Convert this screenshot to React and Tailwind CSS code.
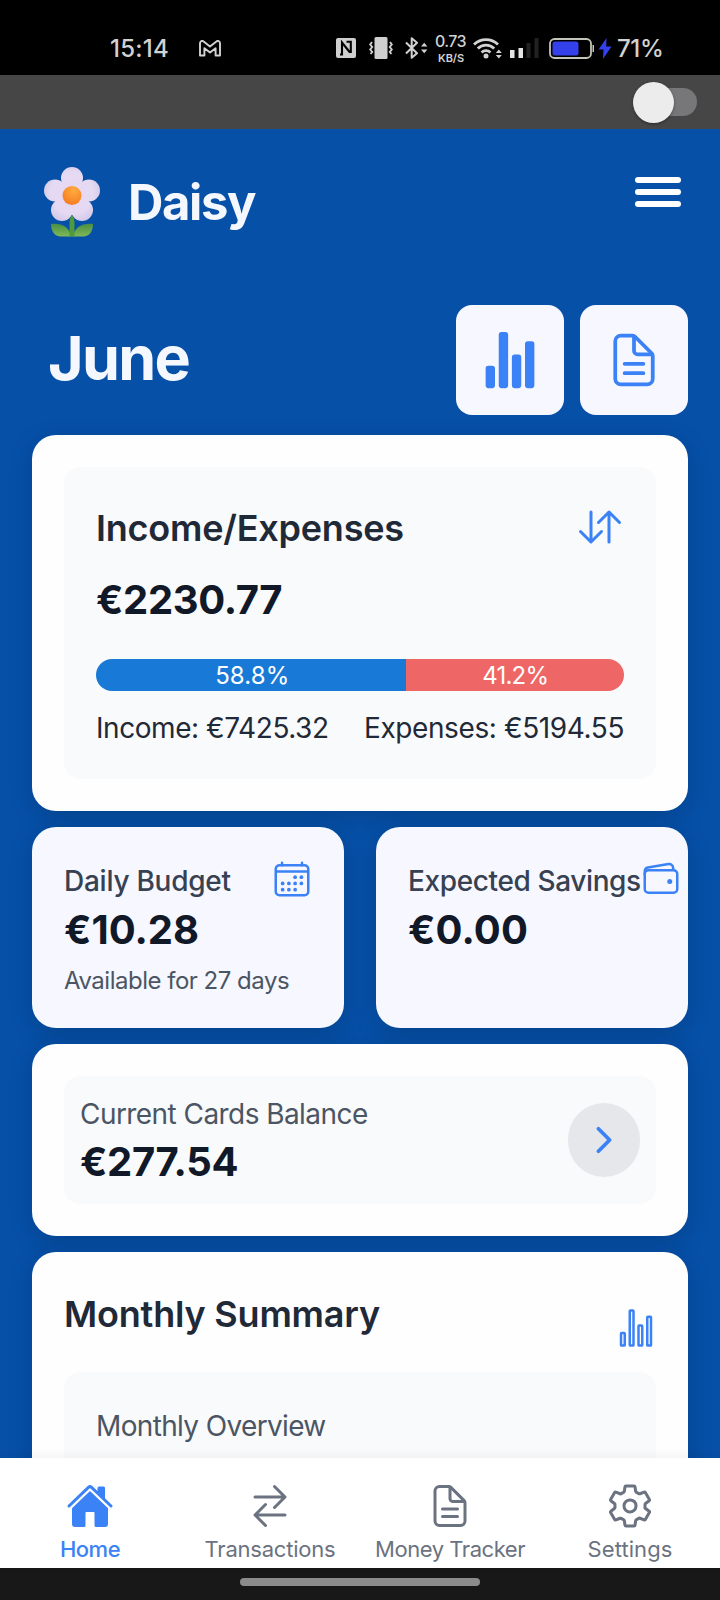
import React from 'react';
import {
  IoStatsChart,
  IoStatsChartOutline,
  IoDocumentTextOutline,
  IoSwapVerticalOutline,
  IoCalendarOutline,
  IoWalletOutline,
  IoHome,
  IoSwapHorizontalOutline,
  IoSettingsOutline,
  IoChevronForward,
} from 'react-icons/io5';

function StatusBar() {
  return (
    <div className="flex h-[75px] shrink-0 items-start bg-black pr-[57px] pl-[110px] pt-8 text-[#d2d2d2]">
      <div className="w-[89px] text-2xl leading-[33px] font-medium tracking-[0.24px]">15:14</div>
      <svg className="mt-2 h-[17px] w-[22px]" viewBox="0 0 22 17" fill="none" stroke="currentColor" strokeWidth="1.9" strokeLinejoin="round">
        <path d="M1 15.5V3.2C1 1 3.2.3 4.6 1.5L11 6.6l6.4-5.1C18.8.3 21 1 21 3.2v12.3h-4.4V8.2L11 12.5 5.4 8.2v7.3z" />
      </svg>
      <div className="flex-1" />
      <svg className="mt-1.5 mr-[13px] h-5 w-5" viewBox="0 0 20 20">
        <rect width="20" height="20" rx="2" fill="#cfcfcf" />
        <path d="M4 16.5h2V4.500L14 14.500M10.500 3.800H14.800V15" fill="none" stroke="#000" strokeWidth="2.100" />
      </svg>
      <svg className="mt-[5px] mr-3 h-[22px] w-6" viewBox="0 0 24 22" fill="none" stroke="#cfcfcf" strokeWidth="1.9">
        <rect x="5.5" y="0" width="13" height="22" rx="1.5" fill="#cfcfcf" stroke="none" />
        <path d="M3 5L1.2 7.5 3.2 10 1.2 12.5 3.2 15 1.5 17M21 5l1.800 2.500L20.800 10l2 2.500-2 2.500 1.700 2" />
      </svg>
      <svg className="mt-[5px] mr-[7px] h-[22px] w-[23px]" viewBox="0 0 23 22">
        <path d="M1 5.5l11 10.700-5.300 4.600V1.200L12 5.800 1 16.500" fill="none" stroke="#d2d2d2" strokeWidth="2" strokeLinejoin="round" />
        <path d="M16 9.500l3.200-3.800 3.200 3.800zM16 12.500l3.200 3.800 3.200-3.800z" fill="#d2d2d2" />
      </svg>
      <div className="flex w-[32px] flex-col items-center gap-px font-medium whitespace-nowrap">
        <div className="-ml-px text-base leading-[19px] tracking-[-0.6px]">0.73</div>
        <div className="text-[11px] leading-[13px] font-semibold tracking-[-0.1px]">KB/S</div>
      </div>
      <svg className="mt-1 ml-[6px] h-[23px] w-[30px]" viewBox="0 0 30 23">
        <g fill="none" stroke="#d2d2d2" strokeWidth="2.8">
          <path d="M1 8.5a17 17 0 0 1 24 0M4.800 12.600a11.500 11.500 0 0 1 16.400 0M8.600 16.500a6.200 6.200 0 0 1 8.800 0" />
        </g>
        <circle cx="13" cy="20" r="2.5" fill="#d2d2d2" />
        <path d="M22.800 17l3-3.400 3 3.400zM22.800 19l3 3.400 3-3.400z" fill="#d2d2d2" />
      </svg>
      <svg className="mt-1.5 ml-[7px] h-5 w-[29px]" viewBox="0 0 29 20">
        <rect x="0" y="12" width="4.5" height="8" fill="#e4e4e4" />
        <rect x="8.5" y="10" width="4.5" height="10" fill="#e4e4e4" />
        <rect x="16.5" y="5" width="4" height="15" fill="#222" />
        <rect x="24.5" y="0" width="4" height="20" fill="#222" />
      </svg>
      <svg className="mt-1.5 ml-[10px] h-[21px] w-[46px]" viewBox="0 0 46 21">
        <rect x="1" y="1" width="41" height="19" rx="4.5" fill="none" stroke="#c4c4b8" strokeWidth="1.8" />
        <rect x="3.5" y="3.5" width="26" height="14" rx="2.5" fill="#3440ea" />
        <path d="M43.500 7h1.500v7h-1.500z" fill="#c4c4b8" />
      </svg>
      <svg className="mt-1.5 ml-[3px] mr-[5px] h-[21px] w-[14px]" viewBox="0 0 14 21">
        <path d="M8.500 0L.5 11.500h5L5 21l8.500-12.500H8.200z" fill="#3440ea" />
      </svg>
      <div className="-mr-2 w-[54px] text-2xl leading-[33px] font-medium tracking-[-0.34px]">71%</div>
    </div>
  );
}

function Flower() {
  return (
    <svg className="h-[70px] w-14" viewBox="0 0 56 70">
      <defs>
        <radialGradient id="petal" gradientUnits="userSpaceOnUse" cx="28" cy="26" r="32">
          <stop offset="0" stopColor="#e6d6f2" />
          <stop offset="0.65" stopColor="#e6daf3" />
          <stop offset="1" stopColor="#cfc6e6" />
        </radialGradient>
        <radialGradient id="heart" cx="0.6" cy="0.25" r="0.8">
          <stop offset="0" stopColor="#ffab3d" />
          <stop offset="1" stopColor="#f47a22" />
        </radialGradient>
        <linearGradient id="leaf" x1="0" y1="0" x2="0" y2="1">
          <stop offset="0" stopColor="#4a8f45" />
          <stop offset="1" stopColor="#7fb858" />
        </linearGradient>
      </defs>
      <path d="M7 57c11-1 18 3 20.500 12.500H17C10.500 69.500 7 64 7 57z" fill="url(#leaf)" />
      <path d="M49 57c-11-1-18 3-20.500 12.500H39C45.500 69.500 49 64 49 57z" fill="url(#leaf)" />
      <g fill="url(#petal)">
        <circle cx="28" cy="11" r="11" />
        <circle cx="11" cy="23.5" r="11" />
        <circle cx="45" cy="23.5" r="11" />
        <circle cx="18" cy="43" r="11" />
        <circle cx="38" cy="43" r="11" />
        <circle cx="28" cy="29" r="16" />
      </g>
      <path d="M28 48c2 2 2.500 5 2.500 9v12.500h-5V57c0-4 .5-7 2.500-9z" fill="#4f9a3c" />
      <circle cx="28" cy="28.5" r="9.5" fill="url(#heart)" />
    </svg>
  );
}

const cardShadow = 'shadow-[0_6px_24px_rgba(0,0,0,0.16)]';

function Amount({ children, className = '' }) {
  return <div className={`text-[40px] leading-[54px] font-bold text-[#111827] ${className}`}>{children}</div>;
}

function NavItem({ icon: Icon, label, className }) {
  return (
    <div className={`flex flex-col items-center pt-6 ${className}`}>
      <Icon className="size-12" />
      <span className="mt-[3px] text-[22px] leading-8 whitespace-nowrap">{label}</span>
    </div>
  );
}

export default function App() {
  return (
    <div className="flex h-[1600px] w-[720px] flex-col overflow-hidden bg-[#0650a8] font-['Inter','Liberation_Sans',sans-serif] antialiased">
      <StatusBar />
      <div className="flex h-[54px] shrink-0 items-center justify-end bg-[#464646] pr-[23px]">
        <div className="flex h-7 w-[60px] items-center rounded-full bg-[#777779]">
          <div className="-ml-1 size-[41px] shrink-0 rounded-full bg-[#ececec] shadow-[0_1px_3px_rgba(0,0,0,0.4)]" />
        </div>
      </div>

      <main className="flex min-h-0 flex-1 flex-col overflow-hidden">
        <header className="flex h-[176px] shrink-0 items-start pt-[38px] pr-[39px] pl-11">
          <Flower />
          <h1 className="mt-[4px] ml-7 flex-1 text-[49px] leading-[64px] font-bold tracking-[-1.39px] text-[#f5f7ff]">Daisy</h1>
          <div className="mt-[9.5px] flex w-[46px] flex-col gap-[6.25px]">
            <span className="h-1.5 rounded-full bg-white" />
            <span className="h-1.5 rounded-full bg-white" />
            <span className="h-1.5 rounded-full bg-white" />
          </div>
        </header>

        <section className="flex h-[110px] shrink-0 items-start pr-8 pl-12">
          <h2 className="mt-[17px] flex-1 text-[61px] leading-[72px] font-bold tracking-[-1.73px] text-[#f5f7ff]">June</h2>
          <div className="flex gap-4 text-[#3b82f6]">
            <div className="flex h-[110px] w-[108px] items-center justify-center rounded-2xl bg-[#f6f7ff]">
              <IoStatsChart className="size-[60px]" />
            </div>
            <div className="flex h-[110px] w-[108px] items-center justify-center rounded-2xl bg-[#f6f7ff]">
              <IoDocumentTextOutline className="size-[60px]" />
            </div>
          </div>
        </section>

        <div className="mt-5 flex shrink-0 flex-col gap-4 px-8">
          <section className={`h-[376px] rounded-3xl bg-[#fefefe] p-8 ${cardShadow}`}>
            <div className="h-[312px] rounded-2xl bg-[#f9fafb] p-8">
              <div className="flex h-14 items-center justify-between">
                <h3 className="pt-0.5 text-4xl leading-[56px] font-semibold tracking-[-0.22px] text-[#1f2937]">Income/Expenses</h3>
                <IoSwapVerticalOutline className="size-12 text-[#3b82f6]" />
              </div>
              <div className="mt-6 text-[40px] leading-[42px] font-bold tracking-[-0.35px] text-[#111827]">€2230.77</div>
              <div className="mt-[38px] flex h-8 overflow-hidden rounded-full text-center text-2xl leading-[33px] text-white">
                <div className="w-[58.8%] bg-[#187ad6] pl-0.5 tracking-[0.1px]">58.8%</div>
                <div className="flex-1 bg-[#ee6666] tracking-[-0.8px]">41.2%</div>
              </div>
              <div className="mt-[17px] flex justify-between text-[28px] leading-10 text-[#1f2937]">
                <span className="tracking-[-0.44px]">Income: €7425.32</span>
                <span className="tracking-[-0.4px]">Expenses: €5194.55</span>
              </div>
            </div>
          </section>

          <section className="grid grid-cols-2 gap-8">
            <div className={`h-[201px] rounded-3xl bg-[#f6f7ff] p-8 ${cardShadow}`}>
              <div className="flex h-[43px] justify-between text-[28px] leading-[45px] font-medium tracking-[-0.25px] whitespace-nowrap text-[#374151]">
                Daily Budget
                <IoCalendarOutline className="size-10 shrink-0 text-[#3b82f6]" />
              </div>
              <Amount className="pt-px">€10.28</Amount>
              <div className="mt-[8px] text-2xl leading-8 tracking-[-0.49px] text-[#4b5563]">Available for 27 days</div>
            </div>
            <div className={`h-[201px] rounded-3xl bg-[#f6f7ff] p-8 ${cardShadow}`}>
              <div className="flex h-[43px] justify-between text-[28px] leading-[45px] font-medium tracking-[-0.38px] whitespace-nowrap text-[#374151]">
                Expected Savings
                <IoWalletOutline className="ml-[0.5px] size-10 shrink-0 text-[#3b82f6]" />
              </div>
              <Amount className="pt-px tracking-[0.16px]">€0.00</Amount>
            </div>
          </section>

          <section className={`h-[192px] rounded-3xl bg-[#fefefe] p-8 ${cardShadow}`}>
            <div className="flex h-32 items-center justify-between rounded-2xl bg-[#f9fafb] px-4">
              <div className="pt-0.5">
                <div className="text-[28px] leading-[42px] tracking-[-0.56px] text-[#4b5563]">Current Cards Balance</div>
                <Amount className="tracking-[-0.34px]">€277.54</Amount>
              </div>
              <div className="flex h-[74px] w-[72px] items-center justify-center rounded-full bg-[#e5e7eb]">
                <IoChevronForward className="size-10 text-[#3b82f6]" />
              </div>
            </div>
          </section>

          <section className={`h-[400px] rounded-3xl bg-[#fefefe] p-8 ${cardShadow}`}>
            <div className="flex h-[88px] items-start justify-between">
              <h3 className="text-4xl leading-[60px] font-semibold tracking-[-0.2px] text-[#1f2937]">Monthly Summary</h3>
              <IoStatsChartOutline className="mt-6 size-10 text-[#3b82f6]" />
            </div>
            <div className="h-60 rounded-2xl bg-[#f9fafb] p-8 text-[28px] leading-[44px] tracking-[-0.65px] text-[#4b5563]">Monthly Overview</div>
          </section>
        </div>
      </main>

      <nav className="z-10 grid h-[110px] shrink-0 grid-cols-4 bg-white text-[#6b7280] shadow-[0_-2px_10px_rgba(0,0,0,0.05)]">
        <NavItem icon={IoHome} label="Home" className="font-medium tracking-[-0.5px] text-[#3b82f6]" />
        <NavItem icon={IoSwapHorizontalOutline} label="Transactions" className="tracking-[-0.22px]" />
        <NavItem icon={IoDocumentTextOutline} label="Money Tracker" className="tracking-[-0.45px]" />
        <NavItem icon={IoSettingsOutline} label="Settings" className="tracking-[0.1px]" />
      </nav>
      <div className="flex h-8 shrink-0 justify-center bg-[#181818] pt-2.5">
        <div className="h-2 w-60 rounded-full bg-[#8c8c8c]" />
      </div>
    </div>
  );
}
